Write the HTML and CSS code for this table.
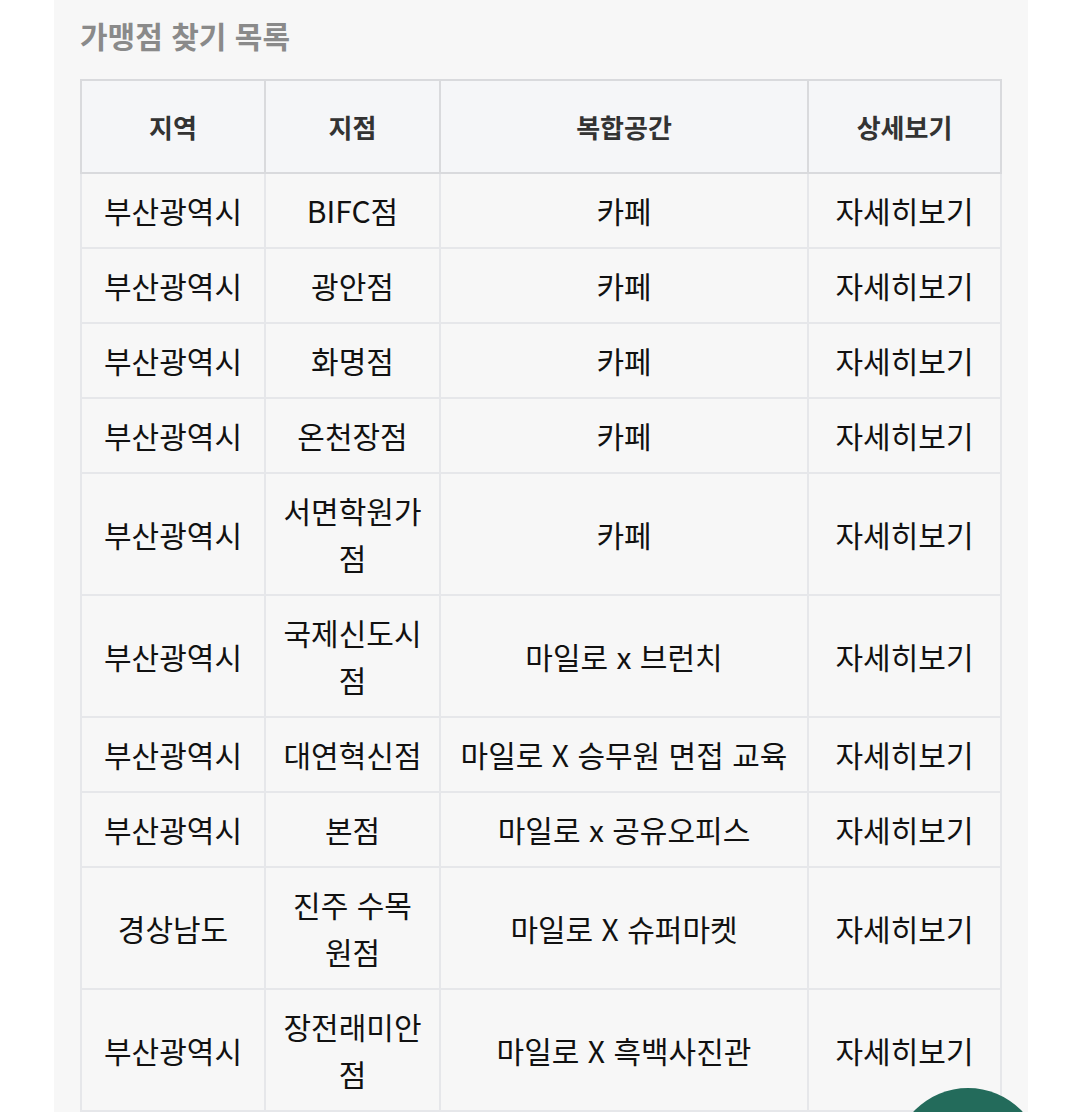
FILE: index.html
```html
<!DOCTYPE html>
<html lang="ko">
<head>
<meta charset="utf-8">
<title>가맹점 찾기 목록</title>
<link rel="stylesheet" href="styles.css">
</head>
<body>
<section class="panel">
  <h2 class="title">가맹점 찾기 목록</h2>
  <table class="stores">
    <colgroup>
      <col class="c-region"><col class="c-branch"><col class="c-space"><col class="c-detail">
    </colgroup>
    <thead>
      <tr><th>지역</th><th>지점</th><th>복합공간</th><th>상세보기</th></tr>
    </thead>
    <tbody>
      <tr><td>부산광역시</td><td>BIFC점</td><td>카페</td><td>자세히보기</td></tr>
      <tr><td>부산광역시</td><td>광안점</td><td>카페</td><td>자세히보기</td></tr>
      <tr><td>부산광역시</td><td>화명점</td><td>카페</td><td>자세히보기</td></tr>
      <tr><td>부산광역시</td><td>온천장점</td><td>카페</td><td>자세히보기</td></tr>
      <tr><td>부산광역시</td><td>서면학원가점</td><td>카페</td><td>자세히보기</td></tr>
      <tr><td>부산광역시</td><td>국제신도시점</td><td>마일로 x 브런치</td><td>자세히보기</td></tr>
      <tr><td>부산광역시</td><td>대연혁신점</td><td>마일로 X 승무원 면접 교육</td><td>자세히보기</td></tr>
      <tr><td>부산광역시</td><td>본점</td><td>마일로 x 공유오피스</td><td>자세히보기</td></tr>
      <tr><td>경상남도</td><td>진주 수목원점</td><td>마일로 X 슈퍼마켓</td><td>자세히보기</td></tr>
      <tr><td>부산광역시</td><td>장전래미안점</td><td>마일로 X 흑백사진관</td><td>자세히보기</td></tr>
    </tbody>
  </table>
</section>
<div class="fab"></div>
</body>
</html>
```

FILE: styles.css
```css
html, body {
  margin: 0;
  padding: 0;
  background: #ffffff;
  font-family: "Noto Sans CJK KR", "Noto Sans", sans-serif;
}

.panel {
  margin-left: 54px;
  width: 974px;
  box-sizing: border-box;
  padding: 12px 28px 40px 26px;
  background: #f7f7f7;
}

.title {
  margin: 0 0 20px 0;
  font-size: 30px;
  line-height: 47px;
  font-weight: 700;
  color: #8a8a8a;
}

.stores {
  width: 920px;
  border-collapse: collapse;
  table-layout: fixed;
  border: 2px solid #d9dadd;
}

.c-region { width: 184px; }
.c-branch { width: 175px; }
.c-space { width: 368px; }
.c-detail { width: 193px; }

.stores th,
.stores td {
  text-align: center;
  vertical-align: middle;
  font-size: 30px;
  line-height: 47px;
  padding: 13px 15px;
  word-break: break-all;
}

.stores th {
  padding-top: 22px;
  padding-bottom: 22px;
  font-size: 26px;
  background: #f5f6f8;
  color: #333333;
  font-weight: 700;
  border: 2px solid #d9dadd;
}

.stores td {
  color: #111111;
  font-weight: 400;
  border: 2px solid #e6e7ea;
}

.fab {
  position: fixed;
  left: 893px;
  top: 1088px;
  width: 150px;
  height: 150px;
  border-radius: 50%;
  background: #236b5b;
}
```
